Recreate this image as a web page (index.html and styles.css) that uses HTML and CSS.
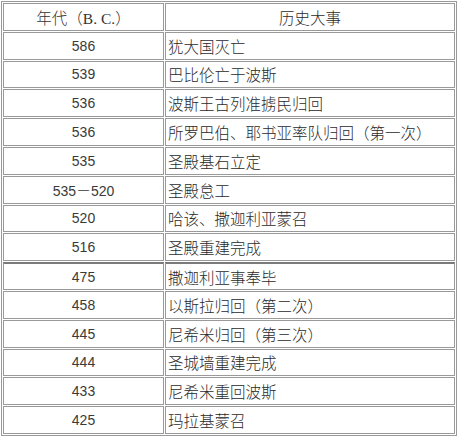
FILE: index.html
```html
<!DOCTYPE html>
<html lang="zh">
<head>
<meta charset="utf-8">
<link rel="stylesheet" href="styles.css">
</head>
<body>
<table class="chrono">
  <tr class="head"><td class="year cjk">年代（B. C.）</td><td class="event center">历史大事</td></tr>
  <tr><td class="year">586</td><td class="event">犹大国灭亡</td></tr>
  <tr><td class="year">539</td><td class="event">巴比伦亡于波斯</td></tr>
  <tr><td class="year">536</td><td class="event">波斯王古列准掳民归回</td></tr>
  <tr><td class="year">536</td><td class="event">所罗巴伯、耶书亚率队归回（第一次）</td></tr>
  <tr><td class="year">535</td><td class="event">圣殿基石立定</td></tr>
  <tr><td class="year">535<span class="dash">－</span>520</td><td class="event">圣殿怠工</td></tr>
  <tr><td class="year">520</td><td class="event">哈该、撒迦利亚蒙召</td></tr>
  <tr><td class="year">516</td><td class="event">圣殿重建完成</td></tr>
  <tr class="thick"><td class="year">475</td><td class="event">撒迦利亚事奉毕</td></tr>
  <tr><td class="year">458</td><td class="event">以斯拉归回（第二次）</td></tr>
  <tr><td class="year">445</td><td class="event">尼希米归回（第三次）</td></tr>
  <tr><td class="year">444</td><td class="event">圣城墙重建完成</td></tr>
  <tr><td class="year">433</td><td class="event">尼希米重回波斯</td></tr>
  <tr><td class="year">425</td><td class="event">玛拉基蒙召</td></tr>
</table>
</body>
</html>
```
FILE: styles.css
```css
html, body {
  margin: 0;
  padding: 0;
  background: #fff;
}
body {
  padding: 1px 0 0 1px;
}
.chrono {
  width: 456px;
  border: 1px solid #9a9a9a;
  border-collapse: separate;
  border-spacing: 1px;
  table-layout: fixed;
}
.chrono td {
  box-sizing: border-box;
  height: 27.8px;
  border: 1px solid #9a9a9a;
  padding: 0;
  vertical-align: middle;
  white-space: nowrap;
}
.year {
  width: 161px;
  text-align: center;
  font-family: "Liberation Sans", Arial, sans-serif;
  font-size: 14px;
  color: #3a3a3a;
}
.dash {
  font-family: "Noto Sans CJK SC", sans-serif;
  font-weight: 300;
  font-size: 15px;
}
.year.cjk {
  font-family: "Liberation Serif", "Noto Sans CJK SC", serif;
  font-weight: 300;
  font-size: 15.5px;
  color: #333;
}
.event {
  padding-left: 2px !important;
  font-family: "Noto Sans CJK SC", sans-serif;
  font-weight: 300;
  font-size: 15.5px;
  color: #2a2a2a;
}
.event.center {
  text-align: center;
  padding-left: 0 !important;
}
.thick td {
  border-top: 2px solid #7a7a7a;
}
```
